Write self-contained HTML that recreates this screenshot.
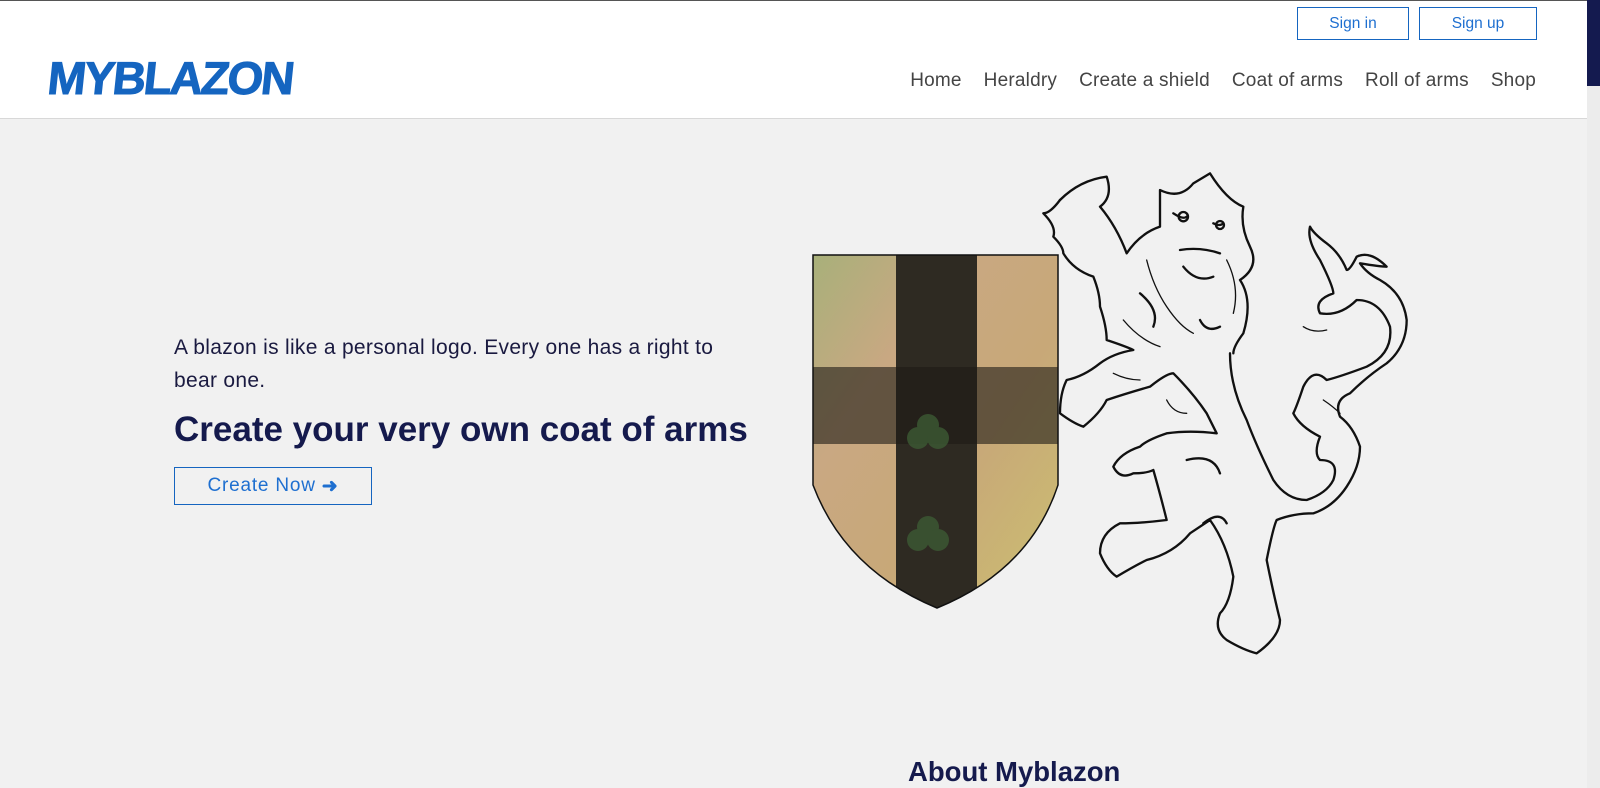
<!DOCTYPE html>
<html><head><meta charset="utf-8"><style>
*{margin:0;padding:0;box-sizing:border-box}
body{width:1600px;height:788px;overflow:hidden;background:#f1f1f1;font-family:"Liberation Sans",sans-serif;position:relative}
.top{position:absolute;left:0;top:0;width:1600px;height:1px;background:#555}
header{position:absolute;left:0;top:1px;width:1587px;height:118px;background:#fff;border-bottom:1px solid #d8d8d8}
.sb{position:absolute;left:1587px;top:0;width:13px;height:788px;background:#ececec}
.sbt{position:absolute;left:1587px;top:0;width:13px;height:86px;background:#141a4f}
.btn{position:absolute;top:6px;height:33px;border:1px solid #1565c0;color:#1e6fd0;font-size:15.5px;display:flex;align-items:center;justify-content:center}
nav{position:absolute;top:69px;right:51px;display:flex;gap:22px;font-size:19px;color:#444;letter-spacing:0.2px}
.logo{position:absolute;left:48px;top:50px;font-family:"Liberation Sans",sans-serif;font-weight:bold;font-size:46px;color:#1565c0;letter-spacing:-2px;transform:skewX(-6deg);-webkit-text-stroke:1px #1565c0}
p.t{position:absolute;left:174px;top:331px;width:575px;font-size:21px;line-height:33px;color:#1a1a40;letter-spacing:0.3px}
h1{position:absolute;left:174px;top:410px;font-size:35px;color:#151a4d;font-weight:bold}
.cn{position:absolute;left:174px;top:467px;width:198px;height:38px;border:1px solid #1565c0;color:#1e6fd0;font-size:19px;display:flex;align-items:center;justify-content:center;letter-spacing:0.8px}
h2{position:absolute;left:908px;top:756px;font-size:27.5px;color:#151a4d;font-weight:bold}
</style></head><body>
<div class="top"></div>
<header>
<div class="logo">MYBLAZON</div>
<div class="btn" style="left:1297px;width:112px">Sign in</div>
<div class="btn" style="left:1419px;width:118px">Sign up</div>
<nav><span>Home</span><span>Heraldry</span><span>Create a shield</span><span>Coat of arms</span><span>Roll of arms</span><span>Shop</span></nav>
</header>
<div class="sb"></div><div class="sbt"></div>
<p class="t">A blazon is like a personal logo. Every one has a right to bear one.</p>
<h1>Create your very own coat of arms</h1>
<div class="cn">Create Now <b style="margin-left:6px">&#10140;</b></div>
<svg style="position:absolute;left:0;top:0" width="1600" height="788">
<defs><linearGradient id="g" x1="0" y1="0" x2="1" y2="1">
<stop offset="0" stop-color="#a8b07a"/><stop offset=".3" stop-color="#c9a882"/><stop offset=".6" stop-color="#c8a878"/><stop offset="1" stop-color="#cbc070"/></linearGradient>
<clipPath id="c"><path d="M813 255H1058V485Q1030 570 937 608Q845 570 813 485Z"/></clipPath></defs>
<g clip-path="url(#c)">
<rect x="813" y="255" width="245" height="360" fill="url(#g)"/>
<rect x="896" y="255" width="81" height="360" fill="#2e2a22"/>
<rect x="813" y="367" width="245" height="77" fill="#1e1a16" opacity=".6"/>
<g fill="#3c5a34" opacity=".8"><circle cx="928" cy="425" r="11"/><circle cx="918" cy="438" r="11"/><circle cx="938" cy="438" r="11"/><circle cx="928" cy="527" r="11"/><circle cx="918" cy="540" r="11"/><circle cx="938" cy="540" r="11"/></g>
</g>
<path d="M813 255H1058V485Q1030 570 937 608Q845 570 813 485Z" fill="none" stroke="#111" stroke-width="1.5"/>
</svg>
<svg style="position:absolute;left:1040px;top:160px" width="380" height="500" viewBox="0 0 1140 1500" fill="none" stroke="#111" stroke-width="7" stroke-linejoin="round" stroke-linecap="round">
<path d="M60 120Q120 60 200 50Q220 110 180 140Q230 200 260 280Q300 220 360 200Q360 120 360 90Q420 120 460 70Q510 40 510 40Q560 120 610 140Q600 200 630 260Q660 320 600 360Q640 420 610 520Q580 560 580 580"/>
<path d="M60 120Q30 160 10 160Q50 200 40 230Q70 260 70 280Q100 330 160 350Q180 400 180 440Q200 500 200 540Q260 560 280 570Q220 580 180 610Q130 650 80 660Q60 700 60 760Q100 790 130 800Q180 760 200 720Q260 700 330 680Q380 640 400 640Q460 700 500 760Q520 800 530 820Q450 810 380 820Q320 840 300 860Q240 880 220 920Q240 960 280 940Q320 940 340 930Q360 1000 380 1080Q300 1090 240 1090Q180 1120 180 1180Q200 1230 230 1250Q280 1220 320 1200Q400 1180 450 1120Q480 1100 510 1080Q560 1150 580 1250Q570 1330 540 1360Q520 1410 560 1440Q610 1470 650 1480Q720 1430 720 1380Q700 1300 680 1200Q700 1100 710 1080Q760 1060 820 1060Q880 1040 920 980Q960 920 960 860Q940 800 900 770Q880 720 930 700Q980 650 1040 610Q1100 560 1100 480Q1090 400 1020 360Q980 340 960 310Q1020 320 1040 320Q990 270 950 290Q930 330 920 330Q900 280 860 250Q820 220 810 200Q800 240 840 300Q880 380 880 400Q820 420 840 460Q900 470 950 420Q1020 420 1050 500Q1060 580 980 620Q900 650 860 660Q820 620 790 680Q770 740 760 760Q780 800 840 830Q820 880 840 900Q900 900 880 960Q860 1000 800 1020Q740 1020 700 960Q650 860 620 780Q570 680 570 580"/>
<path d="M400 160Q430 180 440 170M520 190Q540 200 550 190M420 270Q480 260 540 280M430 320Q470 370 520 350M300 400Q360 450 340 500M480 480Q500 520 540 500M440 900Q520 880 540 940M490 1090Q540 1050 560 1090"/>
<path stroke-width="4" d="M320 300Q340 380 380 440Q420 500 460 520M560 300Q600 380 580 460M250 480Q300 540 360 560M220 640Q260 660 300 660M380 720Q400 760 440 760M790 500Q820 520 860 510M850 720Q880 740 900 760"/>
<circle cx="430" cy="170" r="14"/><circle cx="540" cy="195" r="12"/>
</svg>
<h2>About Myblazon</h2>
</body></html>
